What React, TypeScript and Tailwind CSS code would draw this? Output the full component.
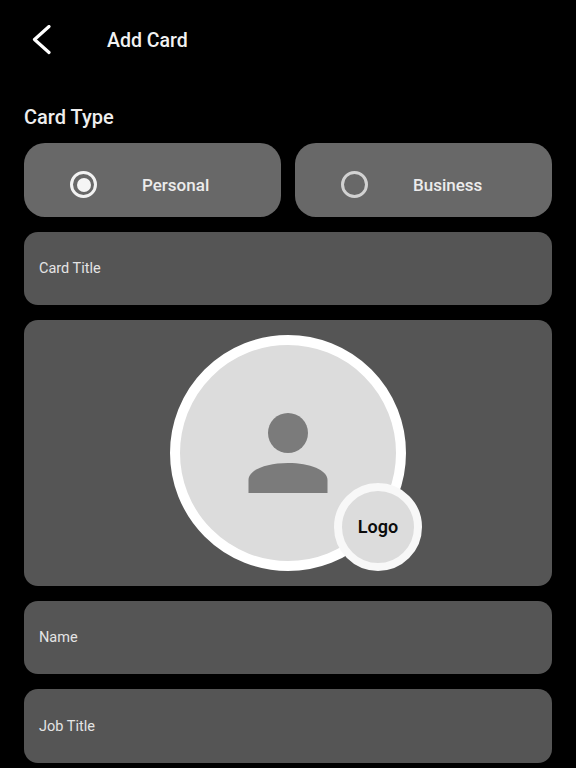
export default function App() {
  const font = "font-['Roboto',sans-serif]";
  return (
    <div className={`w-[576px] h-[768px] overflow-hidden bg-black text-white ${font}`}>
      <header className="h-[80px] flex items-center pl-[32px]">
        <svg width="19" height="30" viewBox="0 0 19 30" className="shrink-0" fill="none">
          <path d="M17 1.5 L2.5 14.5 L17 27.5" stroke="#fff" strokeWidth="3.2" strokeLinecap="round" strokeLinejoin="round" />
        </svg>
        <h1 className="ml-[56px] pt-[2px] text-[19.5px] leading-[24px] font-medium text-[#f2f2f2]">Add Card</h1>
      </header>
      <div className="px-6 pt-[24px] flex flex-col gap-[14.67px]">
        <div>
          <h2 className="text-[20px] leading-[26px] font-medium text-[#eeeeee] mb-[13px]">Card Type</h2>
          <div className="grid grid-cols-2 gap-[14px]">
            <div className="h-[74px] rounded-[21px] bg-[#686868] flex items-center pl-[46px] pt-[9px]">
              <span className="w-[27px] h-[27px] rounded-full border-[3px] border-[#f2f2f2] flex items-center justify-center shrink-0">
                <span className="w-[14px] h-[14px] rounded-full bg-[#f5f5f5]" />
              </span>
              <span className="ml-[45px] pt-[3px] text-[17px] font-medium text-[#ececec]">Personal</span>
            </div>
            <div className="h-[74px] rounded-[21px] bg-[#686868] flex items-center pl-[46px] pt-[9px]">
              <span className="w-[27px] h-[27px] rounded-full border-[3px] border-[#d2d2d2] shrink-0" />
              <span className="ml-[45px] pt-[3px] text-[17px] font-medium text-[#ececec]">Business</span>
            </div>
          </div>
        </div>
        <div className="h-[73.67px] rounded-[14px] bg-[#555555] flex items-center px-[15px] pt-[1px] text-[14.5px] text-[#e4e4e4]">Card Title</div>
        <div className="h-[266px] rounded-[14px] bg-[#555555] flex items-center justify-center">
          <div className="relative w-[236px] h-[236px] rounded-full border-[10px] border-white bg-[#dcdcdc] flex items-center justify-center">
            <svg width="80" height="80" viewBox="0 0 80 80" fill="#7b7b7b">
              <circle cx="40" cy="20" r="20" />
              <path d="M0.5 80 V67 C0.5 57 18 50 40 50 C62 50 79.5 57 79.5 67 V80 Z" />
            </svg>
            <div className="absolute left-[154px] top-[138px] w-[88px] h-[88px] rounded-full border-[8px] border-[#f8f8f8] bg-[#dcdcdc] flex items-center justify-center text-[18px] font-semibold text-[#0c0c0c]">Logo</div>
          </div>
        </div>
        <div className="h-[73.67px] rounded-[14px] bg-[#555555] flex items-center px-[15px] text-[14.5px] text-[#e4e4e4]">Name</div>
        <div className="h-[73.67px] rounded-[14px] bg-[#555555] flex items-center px-[15px] pt-[2px] text-[14.5px] text-[#e4e4e4]">Job Title</div>
      </div>
    </div>
  );
}
